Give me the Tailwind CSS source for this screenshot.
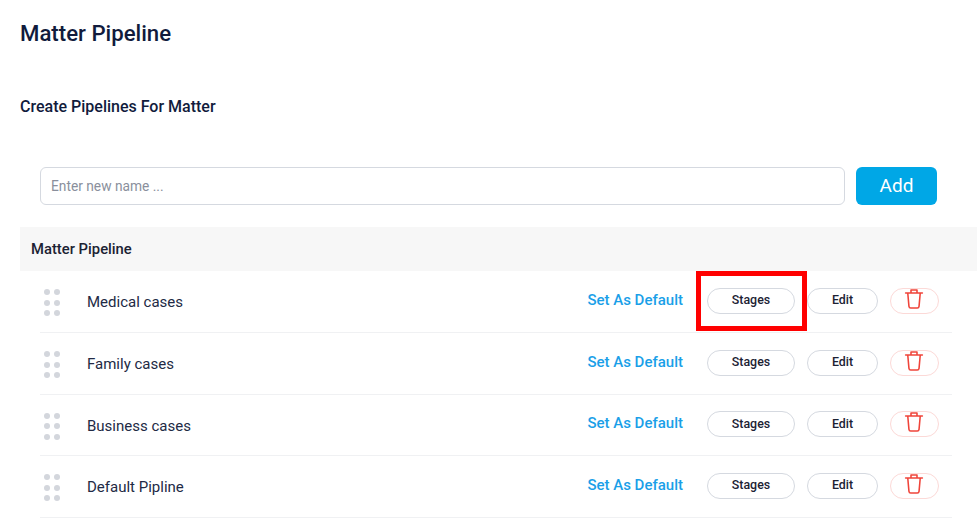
<!DOCTYPE html>
<html>
  <head>
    <meta charset="UTF-8" />
    <script src="https://cdn.jsdelivr.net/npm/@tailwindcss/browser@4"></script>
  </head>
  <body class="bg-white font-['Roboto',sans-serif] w-[980px] h-[524px] overflow-hidden relative">
    <div class="pl-5 pr-[3px]">
      <h1 class="pt-[19px] text-[22.2px] leading-[28px] font-medium text-[#111b3c]">Matter Pipeline</h1>
      <h2 class="mt-[50px] text-[16px] leading-[20px] font-medium text-[#111b3c]">Create Pipelines For Matter</h2>
      <form class="mt-[50px] pl-5 flex gap-[11px] pr-10">
        <input
          type="text"
          placeholder="Enter new name ..."
          class="w-[805px] h-[38px] px-[10px] rounded-md border border-[#d5d9e0] text-[13.75px] placeholder-[#8a8f9c] outline-none"
        />
        <button type="button" class="w-[81px] h-[38px] rounded-md bg-[#00a7e6] text-white text-[19px]">Add</button>
      </form>
      <div class="mt-[22px] h-[44px] bg-[#f7f7f7] pl-[11px] flex items-center text-[14.8px] font-medium text-[#1c2233]">Matter Pipeline</div>
      <div class="pl-5 pr-[25px]">
        <div class="h-[62px] pb-[2px] pr-[13px] border-b border-[#f0f1f3] flex items-center text-[15px]">
          <div class="mt-[4px] pl-1 grid grid-cols-2 gap-x-[4px] gap-y-[4.5px] w-fit mr-[27px]">
            <span class="size-[6px] rounded-full bg-[#d3d6dc]"></span><span class="size-[6px] rounded-full bg-[#d3d6dc]"></span>
            <span class="size-[6px] rounded-full bg-[#d3d6dc]"></span><span class="size-[6px] rounded-full bg-[#d3d6dc]"></span>
            <span class="size-[6px] rounded-full bg-[#d3d6dc]"></span><span class="size-[6px] rounded-full bg-[#d3d6dc]"></span>
          </div>
          <span class="mt-[3px] flex-1 text-[#222a45]">Medical cases</span>
          <span class="-mt-[1px] mr-[24px] font-medium text-[#1a9fe8]">Set As Default</span>
          <button class="w-[88px] h-[26px] rounded-full border border-[#d5d9e0] text-[12.4px] font-medium text-[#1c2233]">Stages</button>
          <button class="ml-3 w-[71px] h-[26px] rounded-full border border-[#d5d9e0] text-[12.4px] font-medium text-[#1c2233]">Edit</button>
          <button class="ml-3 w-[49px] h-[26px] rounded-full border border-[#fcd9d7] flex items-center justify-center">
            <svg class="size-[24px] -mt-[4px] -ml-[2px]" viewBox="0 0 20 20" fill="none" stroke="#f0443a" stroke-width="1.3" stroke-linecap="round" stroke-linejoin="round"><path d="M3 5h14M7.5 5V2.5h5V5M4.8 5l1 11.2c.1.9.6 1.3 1.4 1.3h5.6c.8 0 1.3-.4 1.4-1.3l1-11.2" /></svg>
          </button>
        </div>
        <div class="h-[62px] pb-[2px] pr-[13px] border-b border-[#f0f1f3] flex items-center text-[15px]">
          <div class="mt-[4px] pl-1 grid grid-cols-2 gap-x-[4px] gap-y-[4.5px] w-fit mr-[27px]">
            <span class="size-[6px] rounded-full bg-[#d3d6dc]"></span><span class="size-[6px] rounded-full bg-[#d3d6dc]"></span>
            <span class="size-[6px] rounded-full bg-[#d3d6dc]"></span><span class="size-[6px] rounded-full bg-[#d3d6dc]"></span>
            <span class="size-[6px] rounded-full bg-[#d3d6dc]"></span><span class="size-[6px] rounded-full bg-[#d3d6dc]"></span>
          </div>
          <span class="mt-[3px] flex-1 text-[#222a45]">Family cases</span>
          <span class="-mt-[1px] mr-[24px] font-medium text-[#1a9fe8]">Set As Default</span>
          <button class="w-[88px] h-[26px] rounded-full border border-[#d5d9e0] text-[12.4px] font-medium text-[#1c2233]">Stages</button>
          <button class="ml-3 w-[71px] h-[26px] rounded-full border border-[#d5d9e0] text-[12.4px] font-medium text-[#1c2233]">Edit</button>
          <button class="ml-3 w-[49px] h-[26px] rounded-full border border-[#fcd9d7] flex items-center justify-center">
            <svg class="size-[24px] -mt-[4px] -ml-[2px]" viewBox="0 0 20 20" fill="none" stroke="#f0443a" stroke-width="1.3" stroke-linecap="round" stroke-linejoin="round"><path d="M3 5h14M7.5 5V2.5h5V5M4.8 5l1 11.2c.1.9.6 1.3 1.4 1.3h5.6c.8 0 1.3-.4 1.4-1.3l1-11.2" /></svg>
          </button>
        </div>
        <div class="h-[61px] pb-[2px] pr-[13px] border-b border-[#f0f1f3] flex items-center text-[15px]">
          <div class="mt-[4px] pl-1 grid grid-cols-2 gap-x-[4px] gap-y-[4.5px] w-fit mr-[27px]">
            <span class="size-[6px] rounded-full bg-[#d3d6dc]"></span><span class="size-[6px] rounded-full bg-[#d3d6dc]"></span>
            <span class="size-[6px] rounded-full bg-[#d3d6dc]"></span><span class="size-[6px] rounded-full bg-[#d3d6dc]"></span>
            <span class="size-[6px] rounded-full bg-[#d3d6dc]"></span><span class="size-[6px] rounded-full bg-[#d3d6dc]"></span>
          </div>
          <span class="mt-[4px] flex-1 text-[#222a45]">Business cases</span>
          <span class="-mt-[1px] mr-[24px] font-medium text-[#1a9fe8]">Set As Default</span>
          <button class="w-[88px] h-[26px] rounded-full border border-[#d5d9e0] text-[12.4px] font-medium text-[#1c2233]">Stages</button>
          <button class="ml-3 w-[71px] h-[26px] rounded-full border border-[#d5d9e0] text-[12.4px] font-medium text-[#1c2233]">Edit</button>
          <button class="ml-3 w-[49px] h-[26px] rounded-full border border-[#fcd9d7] flex items-center justify-center">
            <svg class="size-[24px] -mt-[4px] -ml-[2px]" viewBox="0 0 20 20" fill="none" stroke="#f0443a" stroke-width="1.3" stroke-linecap="round" stroke-linejoin="round"><path d="M3 5h14M7.5 5V2.5h5V5M4.8 5l1 11.2c.1.9.6 1.3 1.4 1.3h5.6c.8 0 1.3-.4 1.4-1.3l1-11.2" /></svg>
          </button>
        </div>
        <div class="h-[62px] pb-[2px] pr-[13px] border-b border-[#f0f1f3] flex items-center text-[15px]">
          <div class="mt-[4px] pl-1 grid grid-cols-2 gap-x-[4px] gap-y-[4.5px] w-fit mr-[27px]">
            <span class="size-[6px] rounded-full bg-[#d3d6dc]"></span><span class="size-[6px] rounded-full bg-[#d3d6dc]"></span>
            <span class="size-[6px] rounded-full bg-[#d3d6dc]"></span><span class="size-[6px] rounded-full bg-[#d3d6dc]"></span>
            <span class="size-[6px] rounded-full bg-[#d3d6dc]"></span><span class="size-[6px] rounded-full bg-[#d3d6dc]"></span>
          </div>
          <span class="mt-[3px] flex-1 text-[#222a45]">Default Pipline</span>
          <span class="-mt-[1px] mr-[24px] font-medium text-[#1a9fe8]">Set As Default</span>
          <button class="w-[88px] h-[26px] rounded-full border border-[#d5d9e0] text-[12.4px] font-medium text-[#1c2233]">Stages</button>
          <button class="ml-3 w-[71px] h-[26px] rounded-full border border-[#d5d9e0] text-[12.4px] font-medium text-[#1c2233]">Edit</button>
          <button class="ml-3 w-[49px] h-[26px] rounded-full border border-[#fcd9d7] flex items-center justify-center">
            <svg class="size-[24px] -mt-[4px] -ml-[2px]" viewBox="0 0 20 20" fill="none" stroke="#f0443a" stroke-width="1.3" stroke-linecap="round" stroke-linejoin="round"><path d="M3 5h14M7.5 5V2.5h5V5M4.8 5l1 11.2c.1.9.6 1.3 1.4 1.3h5.6c.8 0 1.3-.4 1.4-1.3l1-11.2" /></svg>
          </button>
        </div>
      </div>
    </div>
    <!-- highlight drawn over the first Stages button -->
    <div class="absolute left-[696px] top-[271px] w-[111px] h-[60px] border-[5px] border-[#ff0000]"></div>
  </body>
</html>
